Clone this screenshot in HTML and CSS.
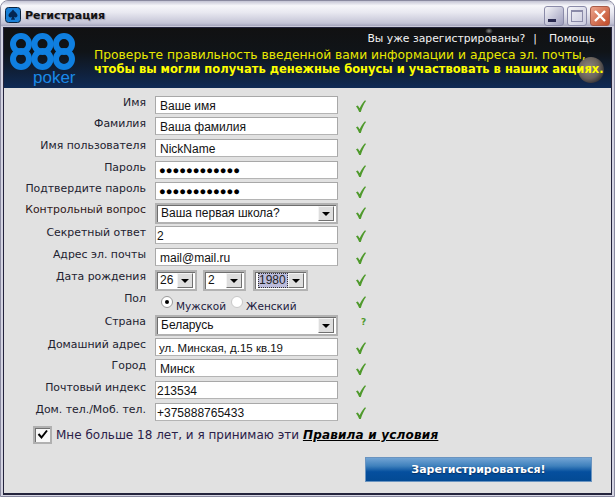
FILE: index.html
```html
<!DOCTYPE html>
<html lang="ru">
<head>
<meta charset="utf-8">
<title>Регистрация</title>
<link rel="stylesheet" href="styles.css">
</head>
<body>
<svg class="defs" width="0" height="0"><defs><symbol id="tick" viewBox="0 0 10 12"><path d="M0 6.200L1.800 5.400 3.700 8.300C5 5.200 6.800 2.400 9 0.300L10 1C7.800 4 6.200 7.600 4.800 12H3.200C2.400 9.800 1.300 7.800 0 6.200z"/></symbol></defs></svg>
<div class="window">
  <header class="titlebar">
    <svg class="app-icon" width="16" height="16" viewBox="0 0 16 16"><rect x="0.5" y="0.5" width="15" height="15" rx="3" fill="#1a80d8" stroke="#0a2440"/><path d="M8 2.500C9.500 5 12.500 6 12.500 8.600c0 1.600-2 2.400-3.500 1.200L10 12.800H6l1-3C5.500 11 3.500 10.200 3.500 8.600 3.500 6 6.500 5 8 2.500z" fill="#042650"/></svg>
    <span class="title">Регистрация</span>
    <div class="win-buttons">
      <span class="wbtn min"><svg width="18" height="18" viewBox="0 0 18 18"><rect x="3" y="12" width="8" height="3" fill="#2a2a50"/></svg></span>
      <span class="wbtn max"><svg width="18" height="18" viewBox="0 0 18 18"><rect x="3.500" y="3.500" width="11" height="11" fill="none" stroke="#8a8aa8"/><rect x="3" y="3" width="12" height="2" fill="#8a8aa8"/></svg></span>
      <span class="wbtn close"><svg width="18" height="18" viewBox="0 0 18 18"><path d="M4 4l10 10M14 4L4 14" stroke="#fff" stroke-width="2.400"/></svg></span>
    </div>
  </header>
  <div class="client">
    <section class="banner">
      <div class="planet"></div>
      <div class="star"></div>
      <div class="logo">
        <svg width="66" height="38" viewBox="0 0 66 38">
          <g fill="none" stroke="#0f7fe0" stroke-width="6">
            <circle cx="11" cy="11" r="8"/><circle cx="11" cy="26" r="8"/>
            <circle cx="32.500" cy="11" r="8"/><circle cx="32.500" cy="26" r="8"/>
            <circle cx="54" cy="11" r="8"/><circle cx="54" cy="26" r="8"/>
          </g>
        </svg>
        <span class="poker">poker</span>
      </div>
      <div class="banner-main">
        <nav class="top-links">
          <span>Вы уже зарегистрированы?</span><span class="sep">|</span><span>Помощь</span>
        </nav>
        <p class="msg">Проверьте правильность введенной вами информации и адреса эл. почты,</p>
        <p class="msg strong">чтобы вы могли получать денежные бонусы и участвовать в наших акциях.</p>
      </div>
    </section>
    <form class="form">
      <div class="rows">
        <label>Имя</label><div class="field"><span class="input">Ваше имя</span></div><svg class="ok"><use href="#tick"/></svg>
        <label>Фамилия</label><div class="field"><span class="input">Ваша фамилия</span></div><svg class="ok"><use href="#tick"/></svg>
        <label>Имя пользователя</label><div class="field"><span class="input">NickName</span></div><svg class="ok"><use href="#tick"/></svg>
        <label>Пароль</label><div class="field"><span class="input dots">●●●●●●●●●●●●</span></div><svg class="ok"><use href="#tick"/></svg>
        <label>Подтвердите пароль</label><div class="field"><span class="input dots">●●●●●●●●●●●●</span></div><svg class="ok"><use href="#tick"/></svg>
        <label class="dark">Контрольный вопрос</label><div class="field"><span class="select"><span class="val">Ваша первая школа?</span><span class="arrow"></span></span></div><svg class="ok"><use href="#tick"/></svg>
        <label>Секретный ответ</label><div class="field"><span class="input tight">2</span></div><svg class="ok"><use href="#tick"/></svg>
        <label>Адрес эл. почты</label><div class="field"><span class="input">mail@mail.ru</span></div><svg class="ok"><use href="#tick"/></svg>
        <label>Дата рождения</label>
        <div class="field date">
          <span class="select day"><span class="val">26</span><span class="arrow"></span></span>
          <span class="select month"><span class="val">2</span><span class="arrow"></span></span>
          <span class="select year"><span class="val picked">1980</span><span class="arrow"></span></span>
        </div><svg class="ok"><use href="#tick"/></svg>
        <label>Пол</label>
        <div class="field gender">
          <span class="radio on"></span><span class="rlabel">Мужской</span>
          <span class="radio"></span><span class="rlabel">Женский</span>
        </div><svg class="ok"><use href="#tick"/></svg>
        <label>Страна</label><div class="field"><span class="select"><span class="val">Беларусь</span><span class="arrow"></span></span></div><span class="q">?</span>
        <label>Домашний адрес</label><div class="field"><span class="input small">ул. Минская, д.15 кв.19</span></div><svg class="ok"><use href="#tick"/></svg>
        <label>Город</label><div class="field"><span class="input">Минск</span></div><svg class="ok"><use href="#tick"/></svg>
        <label>Почтовый индекс</label><div class="field"><span class="input tight">213534</span></div><svg class="ok"><use href="#tick"/></svg>
        <label>Дом. тел./Моб. тел.</label><div class="field"><span class="input tight">+375888765433</span></div><svg class="ok"><use href="#tick"/></svg>
      </div>
      <div class="agree">
        <span class="check"><svg width="13" height="12" viewBox="0 0 13 12"><path d="M2.500 5l3 3.500L11 1.500" fill="none" stroke="#000" stroke-width="2"/></svg></span>
        <span>Мне больше 18 лет, и я принимаю эти <a class="terms">Правила и условия</a></span>
      </div>
      <div class="submit-row"><button type="button" class="submit">Зарегистрироваться!</button></div>
    </form>
  </div>
</div>
</body>
</html>
```
FILE: styles.css
```css
* { box-sizing: border-box; }
html, body { margin: 0; height: 100%; overflow: hidden; }
body { background: #fff; font-family: "DejaVu Sans", sans-serif; }
.defs { position: absolute; }
.window {
  width: 615px; height: 497px; display: flex; flex-direction: column;
  background: #d4d4e2;
  border-radius: 8px 8px 0 0;
  padding: 0 2px 1px;
  border: 1px solid #8a8aa0;
}
.titlebar {
  height: 26px; flex: none; display: flex; align-items: center;
  margin: 0 -2px; padding: 0 4px;
  background: linear-gradient(#c4c4d4 0, #f6f6fa 18%, #e8e8f0 45%, #c4c4d6 85%, #a4a4bc 96%, #eeeef4 100%);
  border-radius: 7px 7px 0 0;
}
.app-icon { margin-top: 2px; flex: none; }
.title { margin: 2px 0 0 4px; font-size: 11px; font-weight: bold; color: #111; text-shadow: 1px 1px 1px #a0a0b4; }
.win-buttons { margin-left: auto; display: flex; gap: 3px; margin-top: 3px; }
.wbtn { width: 20px; height: 20px; border-radius: 3px; border: 1px solid #8a8aa8; display: block; overflow: hidden; }
.wbtn svg { display: block; }
.min { background: linear-gradient(135deg, #f4f4f8, #9c9cbc); }
.max { background: linear-gradient(135deg, #f4f4f8, #c8c8dc); }
.close { background: linear-gradient(135deg, #eca48c, #c04a28); border-color: #a85a48; }
.client {
  flex: 1; display: flex; flex-direction: column; min-height: 0;
  background: #e1e1e1; border: 1px solid #24243c; border-bottom-width: 2px;
}
.banner {
  height: 60px; flex: none; position: relative; overflow: hidden; display: flex;
  background: linear-gradient(#111112 0, #101418 40%, #0f2a55 100%);
}
.planet {
  position: absolute; left: 574px; top: 29px; width: 26px; height: 26px; border-radius: 50%;
  background: radial-gradient(circle at 42% 42%, #8e8880, #6a625c 50%, #2a2a30 80%, #14161e 100%);
}
.star {
  position: absolute; left: 481px; top: 0; width: 8px; height: 6px; border-radius: 50%;
  background: radial-gradient(#8c8c8c, transparent 70%);
}
.logo { width: 90px; flex: none; position: relative; padding: 5px 0 0 6px; }
.logo svg { display: block; }
.poker {
  position: absolute; left: 29px; top: 41px; font: 17px/18px "Liberation Sans", sans-serif; color: #1a8ae8;
}
.banner-main { flex: 1; position: relative; padding-top: 20px; }
.top-links {
  position: absolute; right: 16px; top: 4px; display: flex; font: 10.800px/14px "DejaVu Sans", sans-serif; color: #f4f4f4;
}
.sep { margin: 0 12px 0 8px; }
.msg { margin: 0; font: 12.300px/14px "DejaVu Sans", sans-serif; color: #e8e800; white-space: nowrap; position: relative; }
.strong { font-weight: bold; color: #ffff00; font-size: 11.500px; }
.form { flex: 1; padding-top: 8px; min-height: 0; }
.rows {
  display: grid; grid-template-columns: 142px 192px auto;
  grid-template-rows: 21px 22px 22px 21px 21px 23px 22px 22px 22px 23px 23px 21px 22px 22px 22px;
  align-items: start;
}
.rows label { font-size: 10.900px; line-height: 14px; text-align: right; color: #222230; white-space: nowrap; }
.rows label.dark { color: #301818; }
.field { margin-left: 9px; width: 183px; }
.input {
  display: block; height: 18px; width: 183px; background: #fff; border: 1px solid #a8a8a8;
  border-bottom-color: #b4b4b4; font: 12px/16px "Liberation Sans", sans-serif; padding: 1px 4px 0; color: #111; white-space: nowrap; overflow: hidden;
}
.tight { padding-left: 1px; }
.small { font-size: 11.500px; padding-left: 3px; }
.dots { font: 11.200px/15px "Liberation Sans", sans-serif; color: #000; padding: 1px 3px 0; }
.select {
  display: flex; align-items: center; height: 21px; border: 2px solid #b2b2b2; background: #fff;
  font: 12px/15px "Liberation Sans", sans-serif; color: #111; box-shadow: inset 1px 1px 0 #6e6e6e;
  padding: 1px 2px 1px 4px;
}
.select .val { flex: 1; white-space: nowrap; }
.arrow {
  flex: none; width: 16px; height: 15px; background: #dedede; border: 1px solid;
  border-color: #f4f4f4 #707070 #707070 #f4f4f4; position: relative;
}
.arrow::after {
  content: ""; position: absolute; left: 3px; top: 5px; border: 4px solid transparent; border-top: 4px solid #000; border-bottom: 0;
}
.date { display: flex; }
.date .select { padding-left: 3px; }
.day { width: 42px; margin-right: 6px; }
.month { width: 43px; margin-right: 7px; }
.year { width: 55px; }
.picked { background: #bcbcdc; color: #222; outline: 1px dotted #333; outline-offset: -1px; padding-left: 1px; }
.gender { display: flex; align-items: flex-start; padding: 4px 0 0 6px; font-size: 10.500px; color: #221a40; }
.radio {
  width: 12px; height: 12px; border-radius: 50%; background: #fff; border: 1px solid #c8c8c8; flex: none; position: relative;
}
.radio.on { border-color: #9a9a9a; }
.radio.on::after { content: ""; position: absolute; left: 3px; top: 3px; width: 4px; height: 4px; border-radius: 50%; background: #000; }
.rlabel { margin: 3px 5px 0 3px; line-height: 14px; white-space: nowrap; }
.ok { width: 10px; height: 12px; margin: 4px 0 0 18px; fill: #4f9a2c; display: block; }
.q { margin: 0 0 0 23px; color: #4f9a2c; font: bold 9px/15px "DejaVu Sans", sans-serif; }
.agree { display: flex; align-items: center; margin: 1px 0 0 29px; font-size: 12px; color: #2a2048; white-space: nowrap; height: 18px; }
.check { width: 19px; height: 18px; margin-right: 4px; border: 2px solid #b0b0b0; background: #f8f8f8; box-shadow: inset 1px 1px 0 #707070; display: flex; align-items: center; justify-content: center; flex: none; }
.terms { font-weight: bold; font-style: italic; text-decoration: underline; color: #000; letter-spacing: 0.2px; }
.submit-row { display: flex; justify-content: flex-end; padding-right: 19px; margin-top: 13px; }
.submit {
  width: 227px; height: 25px; border: 1px solid #6a94c0; font: bold 11px/1 "DejaVu Sans", sans-serif; color: #fff; text-shadow: 0 1px 1px #0a3060;
  background: linear-gradient(#72a4d4 0, #3e80bc 35%, #054f9e 60%, #034a94 100%); padding: 0;
}
```
